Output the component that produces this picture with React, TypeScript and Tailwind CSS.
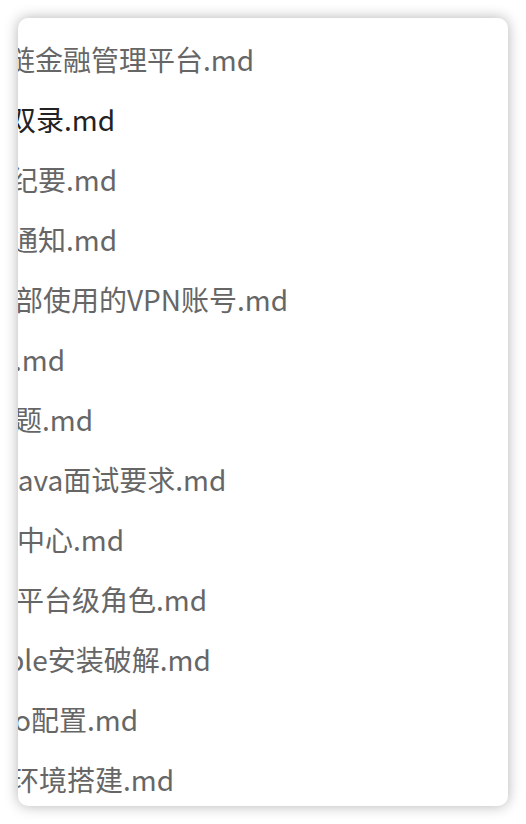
import React from "react";

const items: { text: string; ml: string; dark?: boolean }[] = [
  { text: "链金融管理平台.md", ml: "ml-[-11px]" },
  { text: "双录.md", ml: "ml-[-10px]", dark: true },
  { text: "纪要.md", ml: "ml-[-8px]" },
  { text: "通知.md", ml: "ml-[-8px]" },
  { text: "部使用的VPN账号.md", ml: "ml-[-3px]" },
  { text: ".md", ml: "ml-[-4px]" },
  { text: "题.md", ml: "ml-[-4px]" },
  { text: "java面试要求.md", ml: "ml-[-8px]" },
  { text: "中心.md", ml: "ml-[-1px]" },
  { text: "平台级角色.md", ml: "ml-[-2px]" },
  { text: "ble安装破解.md", ml: "ml-[-11px]" },
  { text: "o配置.md", ml: "ml-[-4px]" },
  { text: "环境搭建.md", ml: "ml-[-7px]" },
];

export default function App() {
  return (
    <div className="w-[526px] h-[824px] bg-white pt-[18px] pl-[18px]">
      <div className="w-[490px] h-[788px] rounded-[10px] bg-white overflow-hidden shadow-[0_0_14px_rgba(0,0,0,0.3)]">
        <div className="flex flex-col pt-[11px]">
          {items.map((it, i) => (
            <div key={i} className="h-[60px] flex items-center whitespace-nowrap">
              <span
                className={`${it.ml} text-[28px] leading-none ${it.dark ? "text-[#222222]" : "text-[#666666]"}`}
                style={{ fontFamily: '"Noto Sans CJK SC", sans-serif' }}
              >
                {it.text}
              </span>
            </div>
          ))}
        </div>
      </div>
    </div>
  );
}
